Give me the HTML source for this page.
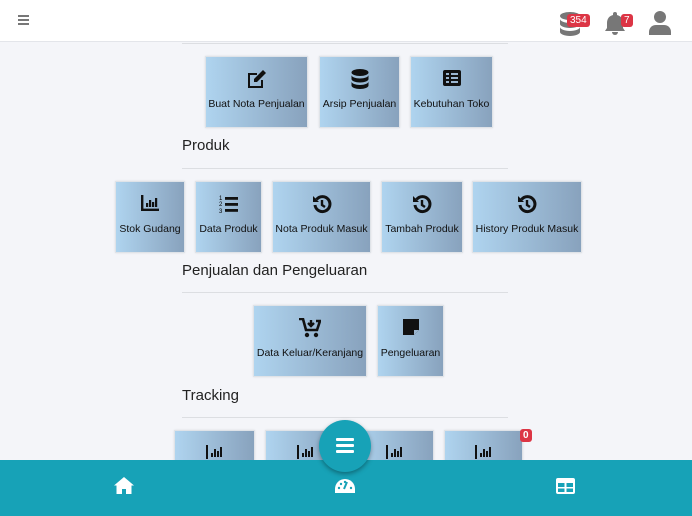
<!DOCTYPE html>
<html><head><meta charset="utf-8">
<style>
*{margin:0;padding:0;box-sizing:border-box}
body{width:692px;height:516px;overflow:hidden;background:#f4f5f9;font-family:"Liberation Sans",sans-serif;position:relative}
.top{position:absolute;left:0;top:0;width:692px;height:42px;background:#fff;border-bottom:1px solid #e3e5ea}
.t{position:absolute;background:linear-gradient(90deg,#afd4ef,#88a2bd);border:1px solid #dfe3e8;box-shadow:0 0 2px rgba(0,0,0,.1);text-align:center;font-size:10.5px;color:#111}
.t svg{position:absolute;left:50%;top:12px;transform:translateX(-50%)}
.t span{position:absolute;left:0;right:0;top:41px;white-space:nowrap}
.h{position:absolute;left:182px;font-size:15px;color:#222}
.ln{position:absolute;left:182px;width:326px;height:1px;background:#dcdee2}
.bot{position:absolute;left:0;top:460px;width:692px;height:56px;background:#17a2b7}
.fab{position:absolute;left:319px;top:420px;width:52px;height:52px;border-radius:50%;background:#17a2b7;box-shadow:0 2px 5px rgba(0,0,0,.35)}
.badge{position:absolute;background:#dc3545;color:#fff;font-size:10px;border-radius:3px;padding:1px 3px;line-height:11px}
</style></head><body>
<div class="top">
  <div style="position:absolute;left:18px;top:15px;width:11px">
    <div style="height:2px;background:#777;margin-bottom:2px"></div><div style="height:2px;background:#777;margin-bottom:2px"></div><div style="height:2px;background:#777"></div>
  </div>
  <svg style="position:absolute;left:559px;top:12px" width="22" height="24" viewBox="0 0 22 24"><ellipse cx="11" cy="4" rx="10" ry="4" fill="#777"/><path d="M1 7c0 2 4.5 4 10 4s10-2 10-4v5c0 2-4.5 4-10 4S1 14 1 12z" fill="#777"/><path d="M1 15c0 2 4.5 4 10 4s10-2 10-4v5c0 2-4.5 4-10 4S1 22 1 20z" fill="#777"/></svg>
  <div class="badge" style="left:567px;top:14px">354</div>
  <svg style="position:absolute;left:604px;top:11px" width="22" height="24" viewBox="0 0 22 24"><path d="M11 1a2 2 0 0 1 2 2v1c4 1 6 4 6 8v5l2 3H1l2-3v-5c0-4 2-7 6-8V3a2 2 0 0 1 2-2z" fill="#777"/><path d="M8 21h6a3 3 0 0 1-6 0z" fill="#777"/></svg>
  <div class="badge" style="left:621px;top:14px">7</div>
  <svg style="position:absolute;left:649px;top:11px" width="22" height="24" viewBox="0 0 22 24"><circle cx="11" cy="6" r="6" fill="#777"/><path d="M0 24v-3c0-4 3-7 7-7h8c4 0 7 3 7 7v3z" fill="#777"/></svg>
</div>

<div class="ln" style="top:43px"></div>

<div class="t" style="left:205px;top:56px;width:103px;height:72px"><svg width="22" height="20" viewBox="0 0 22 20"><path d="M2 4h9v2H4v11h11v-6h2v8H2z" fill="#111"/><path d="M17 1l3 3-9 9H8v-3z" fill="#111"/></svg><span>Buat Nota Penjualan</span></div>
<div class="t" style="left:319px;top:56px;width:81px;height:72px"><svg width="18" height="20" viewBox="0 0 18 20"><ellipse cx="9" cy="3.5" rx="8.5" ry="3.5" fill="#111"/><path d="M.5 6c0 2 4 3.5 8.5 3.5S17.5 8 17.5 6v4c0 2-4 3.5-8.5 3.5S.5 12 .5 10z" fill="#111"/><path d="M.5 12.5c0 2 4 3.5 8.5 3.5s8.5-1.5 8.5-3.5v4C17.5 18.5 13.5 20 9 20S.5 18.5.5 16.5z" fill="#111"/></svg><span>Arsip Penjualan</span></div>
<div class="t" style="left:410px;top:56px;width:83px;height:72px"><svg width="20" height="18" viewBox="0 0 20 18"><rect x="1" y="1" width="18" height="16" rx="2" fill="#111"/><rect x="4" y="4" width="3" height="2" fill="#9bb6d0"/><rect x="9" y="4" width="7" height="2" fill="#9bb6d0"/><rect x="4" y="8" width="3" height="2" fill="#9bb6d0"/><rect x="9" y="8" width="7" height="2" fill="#9bb6d0"/><rect x="4" y="12" width="3" height="2" fill="#9bb6d0"/><rect x="9" y="12" width="7" height="2" fill="#9bb6d0"/></svg><span>Kebutuhan Toko</span></div>

<div class="h" style="top:137px">Produk</div>
<div class="ln" style="top:168px"></div>

<div class="t" style="left:115px;top:181px;width:70px;height:72px"><svg width="20" height="18" viewBox="0 0 20 18"><path d="M1 1h2.4v13.6H19V17H1z" fill="#111"/><rect x="6" y="9" width="2.2" height="4" fill="#111"/><rect x="9" y="6" width="2.2" height="7" fill="#111"/><rect x="12" y="8" width="2.2" height="5" fill="#111"/><rect x="15" y="4" width="2.2" height="9" fill="#111"/></svg><span>Stok Gudang</span></div>
<div class="t" style="left:195px;top:181px;width:67px;height:72px"><svg width="20" height="20" viewBox="0 0 20 20"><text x="0" y="6" font-size="6" font-family="Liberation Sans">1</text><text x="0" y="12" font-size="6" font-family="Liberation Sans">2</text><text x="0" y="19" font-size="6" font-family="Liberation Sans">3</text><rect x="6" y="3" width="13" height="2.8" fill="#111"/><rect x="6" y="9" width="13" height="2.8" fill="#111"/><rect x="6" y="15" width="13" height="2.8" fill="#111"/></svg><span>Data Produk</span></div>
<div class="t" style="left:272px;top:181px;width:99px;height:72px"><svg width="20" height="20" viewBox="0 0 20 20"><path d="M4.5 5.5A7.5 7.5 0 1 1 3 11" fill="none" stroke="#111" stroke-width="3"/><path d="M1 2v6h6z" fill="#111"/><path d="M10 6v5l3 2" fill="none" stroke="#111" stroke-width="2.4"/></svg><span>Nota Produk Masuk</span></div>
<div class="t" style="left:381px;top:181px;width:82px;height:72px"><svg width="20" height="20" viewBox="0 0 20 20"><path d="M4.5 5.5A7.5 7.5 0 1 1 3 11" fill="none" stroke="#111" stroke-width="3"/><path d="M1 2v6h6z" fill="#111"/><path d="M10 6v5l3 2" fill="none" stroke="#111" stroke-width="2.4"/></svg><span>Tambah Produk</span></div>
<div class="t" style="left:472px;top:181px;width:110px;height:72px"><svg width="20" height="20" viewBox="0 0 20 20"><path d="M4.5 5.5A7.5 7.5 0 1 1 3 11" fill="none" stroke="#111" stroke-width="3"/><path d="M1 2v6h6z" fill="#111"/><path d="M10 6v5l3 2" fill="none" stroke="#111" stroke-width="2.4"/></svg><span>History Produk Masuk</span></div>

<div class="h" style="top:262px">Penjualan dan Pengeluaran</div>
<div class="ln" style="top:292px"></div>

<div class="t" style="left:253px;top:305px;width:114px;height:72px"><svg width="22" height="20" viewBox="0 0 22 20"><path d="M0 1h4l3 11h11l3-9h-4" fill="none" stroke="#111" stroke-width="2.6"/><path d="M12 2v6M9 5l3 3 3-3" fill="none" stroke="#111" stroke-width="2.4"/><circle cx="8" cy="17" r="2.2" fill="#111"/><circle cx="17" cy="17" r="2.2" fill="#111"/></svg><span>Data Keluar/Keranjang</span></div>
<div class="t" style="left:377px;top:305px;width:67px;height:72px"><svg width="18" height="18" viewBox="0 0 18 18"><path d="M1 1h16v11l-5 5H1z" fill="#111"/><path d="M12 17v-5h5" fill="#9bb6d0"/></svg><span>Pengeluaran</span></div>

<div class="h" style="top:387px">Tracking</div>
<div class="ln" style="top:417px"></div>

<div class="t" style="left:174px;top:430px;width:81px;height:40px"><svg style="top:14px" width="20" height="14" viewBox="0 0 20 14"><rect x="1" y="0" width="2" height="14" fill="#111"/><rect x="6" y="8" width="2" height="4" fill="#111"/><rect x="9" y="4" width="2" height="8" fill="#111"/><rect x="12" y="6" width="2" height="6" fill="#111"/><rect x="15" y="2" width="2" height="10" fill="#111"/></svg></div>
<div class="t" style="left:265px;top:430px;width:81px;height:40px"><svg style="top:14px" width="20" height="14" viewBox="0 0 20 14"><rect x="1" y="0" width="2" height="14" fill="#111"/><rect x="6" y="8" width="2" height="4" fill="#111"/><rect x="9" y="4" width="2" height="8" fill="#111"/><rect x="12" y="6" width="2" height="6" fill="#111"/><rect x="15" y="2" width="2" height="10" fill="#111"/></svg></div>
<div class="t" style="left:355px;top:430px;width:79px;height:40px"><svg style="top:14px" width="20" height="14" viewBox="0 0 20 14"><rect x="1" y="0" width="2" height="14" fill="#111"/><rect x="6" y="8" width="2" height="4" fill="#111"/><rect x="9" y="4" width="2" height="8" fill="#111"/><rect x="12" y="6" width="2" height="6" fill="#111"/><rect x="15" y="2" width="2" height="10" fill="#111"/></svg></div>
<div class="t" style="left:444px;top:430px;width:79px;height:40px"><svg style="top:14px" width="20" height="14" viewBox="0 0 20 14"><rect x="1" y="0" width="2" height="14" fill="#111"/><rect x="6" y="8" width="2" height="4" fill="#111"/><rect x="9" y="4" width="2" height="8" fill="#111"/><rect x="12" y="6" width="2" height="6" fill="#111"/><rect x="15" y="2" width="2" height="10" fill="#111"/></svg></div>
<div class="badge" style="left:520px;top:429px;font-weight:bold">0</div>

<div class="bot">
  <svg style="position:absolute;left:114px;top:17px" width="20" height="17" viewBox="0 0 20 17"><path d="M10 0L0 8.5h2.5V17h5.5v-5h4v5h5.5V8.5H20z" fill="#fff"/></svg>
  <svg style="position:absolute;left:335px;top:19px" width="20" height="14" viewBox="0 0 20 14"><path d="M10 0A10 10 0 0 0 0 10v4h20v-4A10 10 0 0 0 10 0z" fill="#fff"/><path d="M9 10l3-7" stroke="#17a2b7" stroke-width="2"/><circle cx="4" cy="9" r="1.2" fill="#17a2b7"/><circle cx="6" cy="5" r="1.2" fill="#17a2b7"/><circle cx="10" cy="3" r="1.2" fill="#17a2b7"/><circle cx="16" cy="9" r="1.2" fill="#17a2b7"/></svg>
  <svg style="position:absolute;left:556px;top:18px" width="19" height="16" viewBox="0 0 19 16"><rect width="19" height="16" rx="2" fill="#fff"/><rect x="2" y="5" width="6.5" height="4" fill="#17a2b7"/><rect x="10.5" y="5" width="6.5" height="4" fill="#17a2b7"/><rect x="2" y="10.5" width="6.5" height="3.5" fill="#17a2b7"/><rect x="10.5" y="10.5" width="6.5" height="3.5" fill="#17a2b7"/></svg>
</div>
<div class="fab">
  <div style="position:absolute;left:17px;top:18px;width:18px">
    <div style="height:3px;background:#fff;border-radius:1px;margin-bottom:3px"></div><div style="height:3px;background:#fff;border-radius:1px;margin-bottom:3px"></div><div style="height:3px;background:#fff;border-radius:1px"></div>
  </div>
</div>
</body></html>
